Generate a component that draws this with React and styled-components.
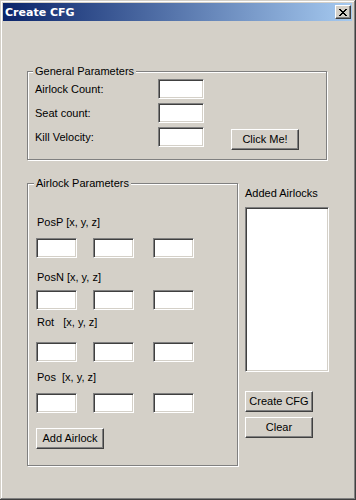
import React from "react";
import styled, { createGlobalStyle } from "styled-components";

const GlobalStyle = createGlobalStyle`
  html, body {
    margin: 0;
    padding: 0;
    background: #d4d0c8;
  }
`;

const raised = `
  border: 1px solid;
  border-color: #ffffff #404040 #404040 #ffffff;
  box-shadow: inset -1px -1px #808080;
`;

const sunken = `
  border: 1px solid;
  border-color: #808080 #ffffff #ffffff #808080;
  box-shadow: inset 1px 1px #404040, inset -1px -1px #d4d0c8;
`;

const Window = styled.div`
  width: 356px;
  height: 500px;
  box-sizing: border-box;
  padding: 3px 4px 4px 3px;
  background: #d4d0c8;
  box-shadow: inset -1px -1px #404040, inset 1px 1px #d4d0c8,
    inset -2px -2px #808080, inset 2px 2px #ffffff;
  display: flex;
  flex-direction: column;
  font-family: "Liberation Sans", Arial, sans-serif;
  font-size: 11px;
  line-height: 13px;
  color: #000;
`;

const TitleBar = styled.div`
  height: 18px;
  display: flex;
  align-items: center;
  justify-content: space-between;
  padding: 0 1px 0 2px;
  background: linear-gradient(to right, #0a246a, #a6caf0);
  color: #fff;
  font-family: "DejaVu Sans", "Liberation Sans", sans-serif;
  font-size: 11px;
  font-weight: bold;
`;

const CloseButton = styled.div`
  width: 16px;
  height: 14px;
  box-sizing: border-box;
  background: #d4d0c8;
  ${raised}
  display: flex;
  align-items: center;
  justify-content: center;
`;

const Client = styled.div`
  flex: 1;
  display: flex;
  flex-direction: column;
  padding: 44px 0 0 24px;
`;

const Group = styled.fieldset`
  margin: 0;
  box-sizing: border-box;
  width: ${(p) => p.$width}px;
  border: 1px solid #808080;
  box-shadow: inset 1px 1px #ffffff, 1px 1px #ffffff;
  padding: ${(p) => p.$pad};
  display: flex;
  flex-direction: column;
`;

const Legend = styled.legend`
  padding: 0 2px;
  margin-left: -2px;
  background: #d4d0c8;
`;

const FieldRow = styled.div`
  display: flex;
  align-items: flex-start;
  height: 20px;
  & + & {
    margin-top: 4px;
  }
`;

const Label = styled.span`
  width: ${(p) => p.$width || "auto"};
  align-self: center;
  white-space: pre;
`;

const TextBox = styled.div`
  width: ${(p) => p.$w}px;
  height: 20px;
  box-sizing: border-box;
  background: #fff;
  ${sunken}
`;

const Button = styled.div`
  width: 68px;
  height: 21px;
  box-sizing: border-box;
  background: #d4d0c8;
  ${raised}
  display: flex;
  align-items: center;
  justify-content: center;
  margin-top: ${(p) => p.$mt || 0}px;
  margin-left: ${(p) => p.$ml || 0}px;
`;

const Lower = styled.div`
  display: flex;
  align-items: flex-start;
  margin-top: 17px;
  gap: 7px;
`;

const CoordLabel = styled.div`
  white-space: pre;
  margin: ${(p) => p.$mt}px 0 ${(p) => p.$gap}px 1px;
`;

const CoordRow = styled.div`
  display: grid;
  grid-template-columns: 57px 60px 41px;
`;

const Side = styled.div`
  display: flex;
  flex-direction: column;
  padding-top: 10px;
`;

const ListBox = styled.div`
  width: 84px;
  height: 165px;
  box-sizing: border-box;
  margin: 7px 0 19px;
  background: #fff;
  ${sunken}
`;

const coords = [
  { label: "PosP [x, y, z]", mt: 26, gap: 9 },
  { label: "PosN [x, y, z]", mt: 13, gap: 6 },
  { label: "Rot   [x, y, z]", mt: 6, gap: 13 },
  { label: "Pos  [x, y, z]", mt: 9, gap: 9 },
];

export default function App() {
  return (
    <>
      <GlobalStyle />
      <Window>
        <TitleBar>
          <span>Create CFG</span>
          <CloseButton>
            <svg width="8" height="7" viewBox="0 0 8 7" shapeRendering="crispEdges">
              <path
                d="M0 0h2v1H0zM6 0h2v1H6zM1 1h2v1H1zM5 1h2v1H5zM2 2h4v1H2zM3 3h2v1H3zM2 4h4v1H2zM1 5h2v1H1zM5 5h2v1H5zM0 6h2v1H0zM6 6h2v1H6z"
                fill="#000"
              />
            </svg>
          </CloseButton>
        </TitleBar>
        <Client>
          <Group $width={300} $pad="1px 7px 12px 7px">
            <Legend>General Parameters</Legend>
            <FieldRow>
              <Label $width="123px">Airlock Count:</Label>
              <TextBox $w={46} />
            </FieldRow>
            <FieldRow>
              <Label $width="123px">Seat count:</Label>
              <TextBox $w={46} />
            </FieldRow>
            <FieldRow>
              <Label $width="123px">Kill Velocity:</Label>
              <TextBox $w={46} />
              <Button $mt={2} $ml={27}>Click Me!</Button>
            </FieldRow>
          </Group>
          <Lower>
            <Group $width={211} $pad="0 8px 16px 8px">
              <Legend>Airlock Parameters</Legend>
              {coords.map((c) => (
                <React.Fragment key={c.label}>
                  <CoordLabel $mt={c.mt} $gap={c.gap}>
                    {c.label}
                  </CoordLabel>
                  <CoordRow>
                    <TextBox $w={41} />
                    <TextBox $w={41} />
                    <TextBox $w={41} />
                  </CoordRow>
                </React.Fragment>
              ))}
              <Button $mt={15}>Add Airlock</Button>
            </Group>
            <Side>
              <span>Added Airlocks</span>
              <ListBox />
              <Button>Create CFG</Button>
              <Button $mt={5}>Clear</Button>
            </Side>
          </Lower>
        </Client>
      </Window>
    </>
  );
}
